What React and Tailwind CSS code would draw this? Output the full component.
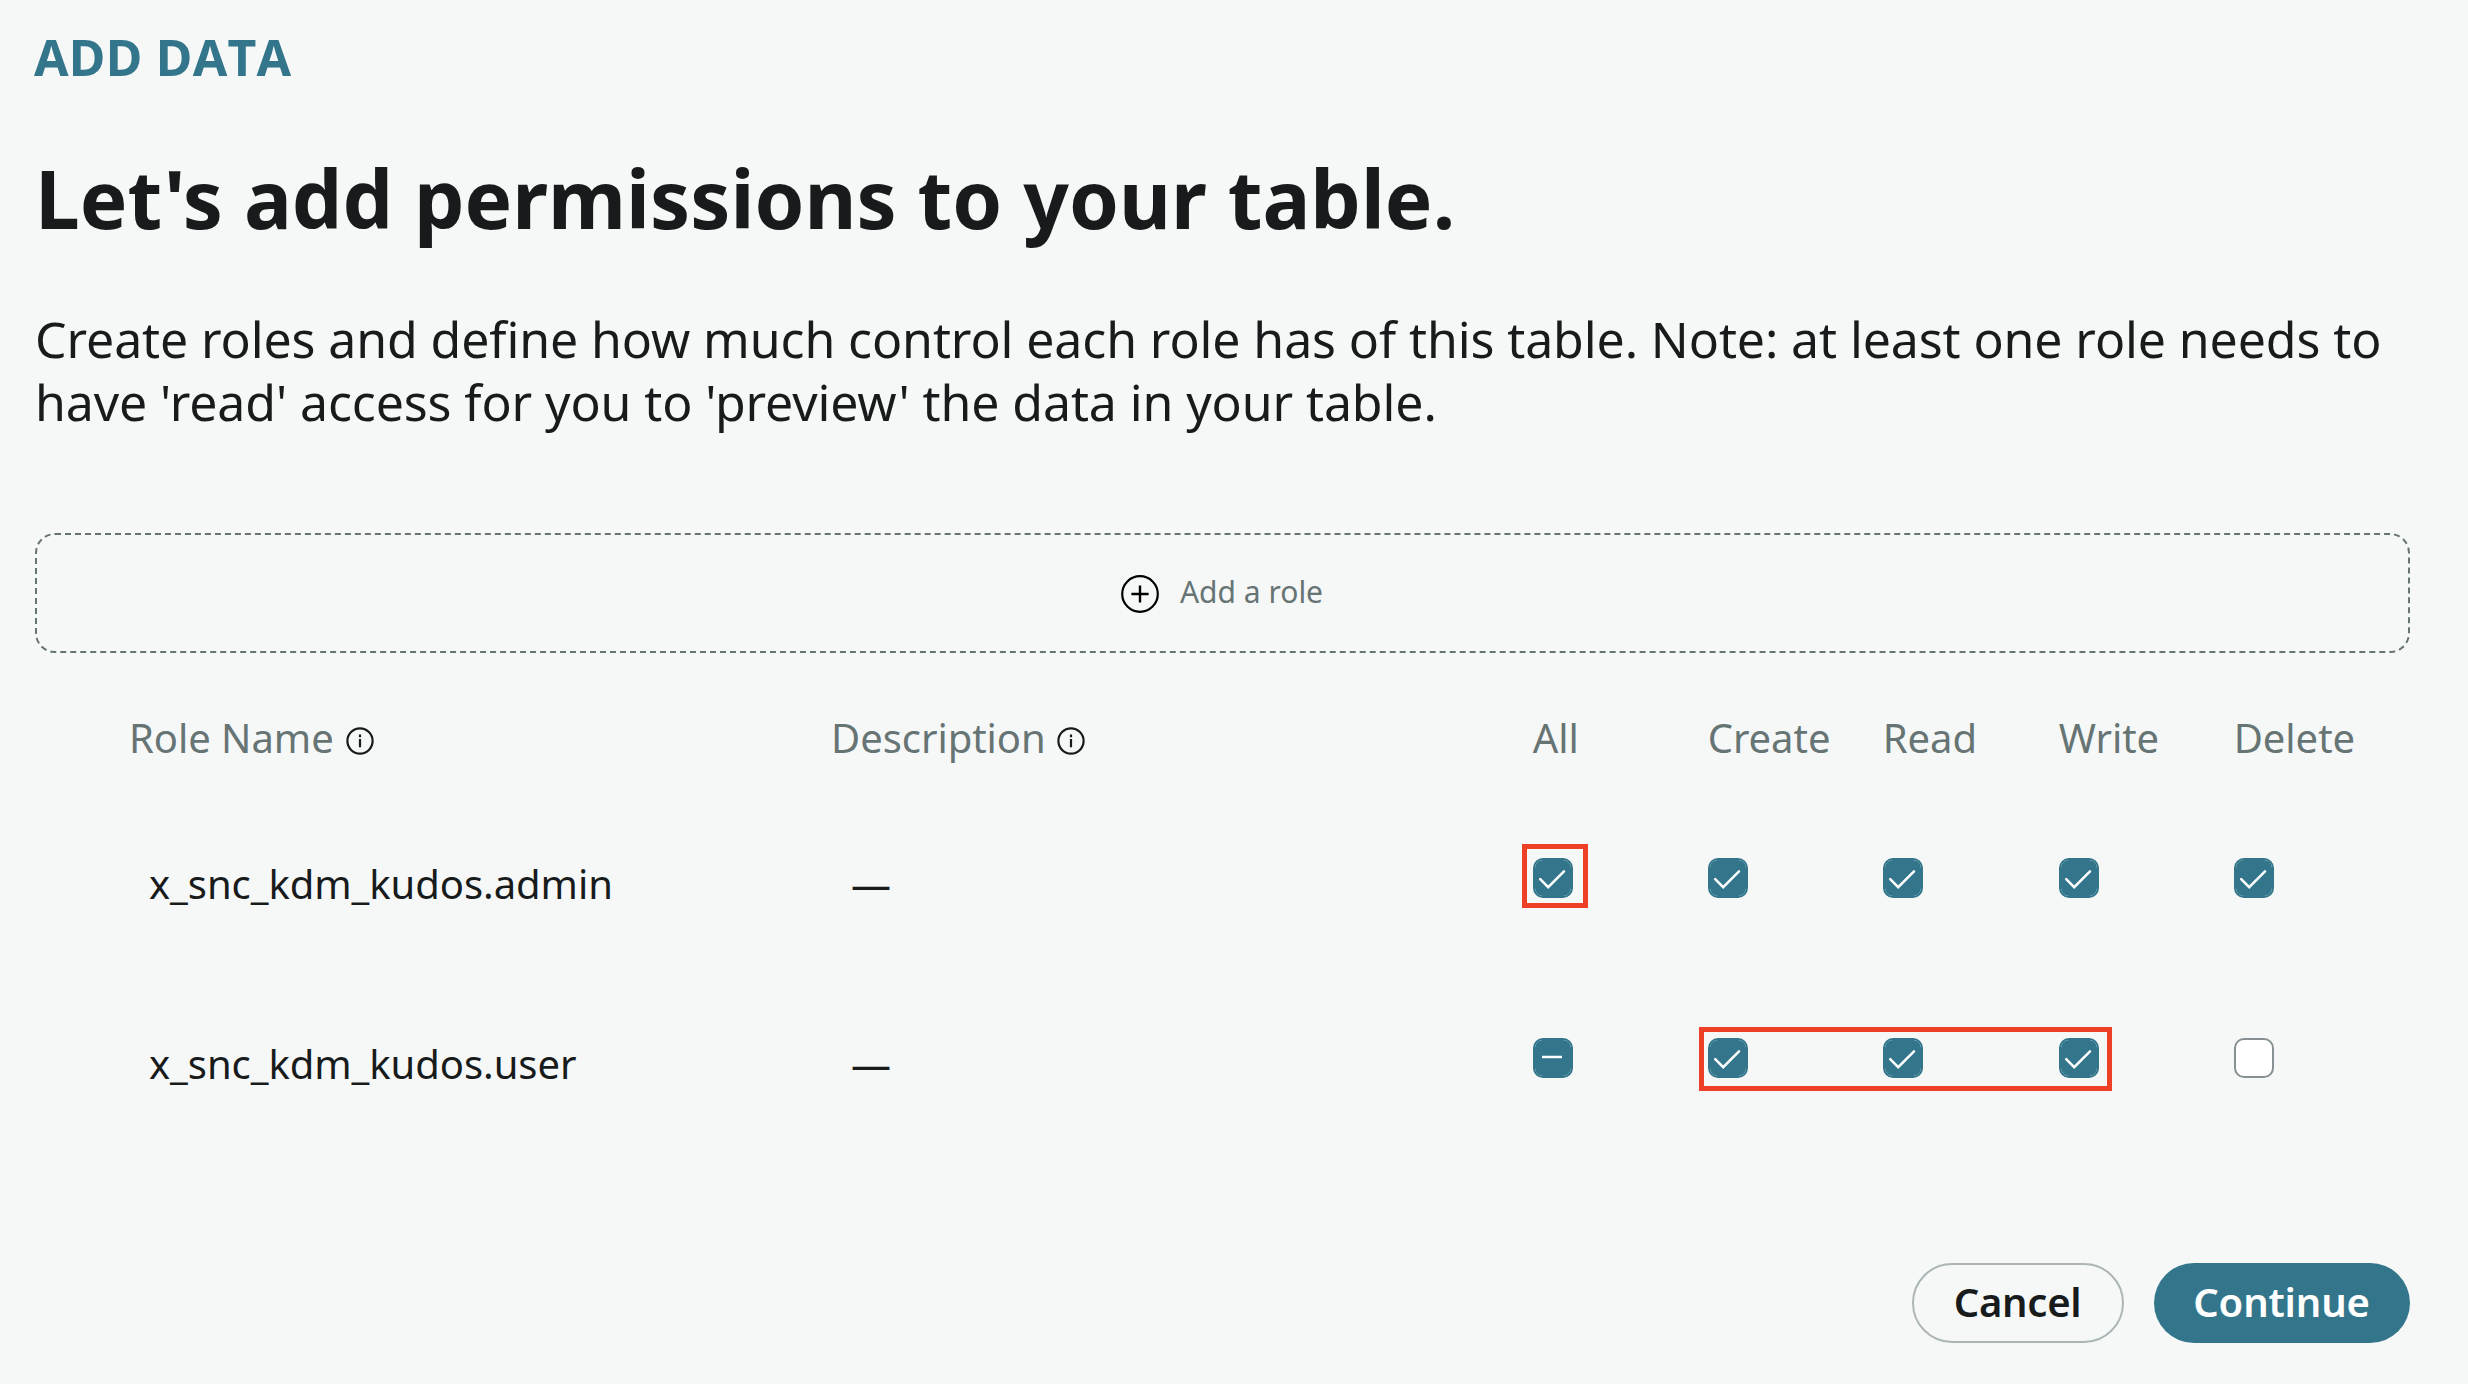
import React from "react";

const GRID = "grid grid-cols-[702px_702px_175px_175px_176px_175px_175px]";

const COLUMNS = ["All", "Create", "Read", "Write", "Delete"];

const ROLES = [
  { name: "x_snc_kdm_kudos.admin", cells: ["on", "on", "on", "on", "on"], highlight: { index: 0, span: "one" } },
  { name: "x_snc_kdm_kudos.user", cells: ["mixed", "on", "on", "on", "off"], highlight: { index: 1, span: "three" } },
];

const HIGHLIGHTS = {
  one: "absolute left-[-11.5px] top-[-14.5px] h-[64.5px] w-[66px] border-5 border-[#ee4027]",
  three: "absolute -left-[9.5px] -top-[11.5px] h-[64px] w-[413px] border-5 border-[#ee4027]",
};

function PlusCircle() {
  return (
    <svg className="mt-0.5 size-10" viewBox="0 0 40 40" fill="none" stroke="#000">
      <circle cx="20" cy="20" r="17.8" strokeWidth="2.2" />
      <path d="M11.4 20h17.2M20 11.4v17.2" strokeWidth="2.4" />
    </svg>
  );
}

function InfoIcon() {
  return (
    <svg className="mt-[5px] size-7" viewBox="0 0 28 28" fill="none" stroke="#181b1b">
      <circle cx="14" cy="14" r="12.6" strokeWidth="2.2" />
      <path d="M14 7.6v2.6M14 12v8.2" strokeWidth="2.2" />
    </svg>
  );
}

function Checkbox({ state }) {
  if (state === "off") {
    return <div className="size-10 rounded-[10px] border-2 border-[#879092] bg-white" />;
  }
  return (
    <div className="size-10 rounded-[10px] border-2 border-[#33768c] bg-white">
      <div className="flex size-9 items-center justify-center rounded-lg bg-[#33768c]">
        <svg className="size-10 shrink-0" viewBox="0 0 40 40" fill="none" stroke="#fff" strokeWidth="2.5">
          {state === "on" ? (
            <path d="M7.2 21.2l8 8L31 13.4" strokeLinecap="round" />
          ) : (
            <path d="M9 19h20" />
          )}
        </svg>
      </div>
    </div>
  );
}

export default function App() {
  return (
    <main className="flex h-[1384px] w-[2468px] flex-col overflow-hidden bg-[#f6f8f8] pl-[35px] pr-[58px] pt-5 font-['Noto_Sans',sans-serif] text-[40px] leading-[54px] text-[#181b1b]">
      <h2 className="-ml-px text-[50px] font-bold leading-[74px] tracking-[0.25px] text-[#33768c] [font-kerning:none]">ADD DATA</h2>
      <h1 className="mt-[56px] text-[80px] font-bold leading-[96px] tracking-[0.04px]">
        Let's add permissions to your table.
      </h1>
      <p className="mt-[62px] whitespace-nowrap text-[50px] leading-[63px] tracking-[-0.105px]">
        Create roles and define how much control each role has of this table. Note: at least one role needs to
        <br />
        have 'read' access for you to 'preview' the data in your table.
      </p>

      <button className="mt-[99px] flex h-[120px] shrink-0 items-center justify-center gap-5 rounded-[20px] border-2 border-dashed border-[#677474] pr-0.5">
        <PlusCircle />
        <span className="pb-0.5 text-[30px] leading-10 text-[#677474]">Add a role</span>
      </button>

      <section className="mt-[58px] pl-[93px]">
        <div className={`${GRID} tracking-[-0.05px] text-[#677474]`}>
          <div className="flex items-center gap-3 pl-px">Role Name <InfoIcon /></div>
          <div className="flex items-center gap-[11px] pl-px">Description <InfoIcon /></div>
          {COLUMNS.map((c) => (
            <div key={c} className="pl-[0.7px]">{c}</div>
          ))}
        </div>
        <div className="mt-[29px]">
          {ROLES.map((r) => (
            <div key={r.name} className={`${GRID} h-[180px] items-center`}>
              <div className="pl-[21px] tracking-[-0.06px]">{r.name}</div>
              <div className="pl-[21px]">—</div>
              {r.cells.map((s, i) => (
                <div key={i} className="pb-3 pl-px">
                  <div className="relative size-10">
                    <Checkbox state={s} />
                    {r.highlight.index === i && <div className={HIGHLIGHTS[r.highlight.span]} />}
                  </div>
                </div>
              ))}
            </div>
          ))}
        </div>
      </section>

      <footer className="mt-[109px] flex justify-end gap-[30px] font-semibold">
        <button className="h-20 w-[212px] rounded-full border-2 border-[#acb5b6] pb-[3px] pr-px tracking-[-0.25px]">Cancel</button>
        <button className="h-20 w-[256px] rounded-full bg-[#33768c] pb-[3px] pr-px tracking-[-0.15px] text-white">Continue</button>
      </footer>
    </main>
  );
}
